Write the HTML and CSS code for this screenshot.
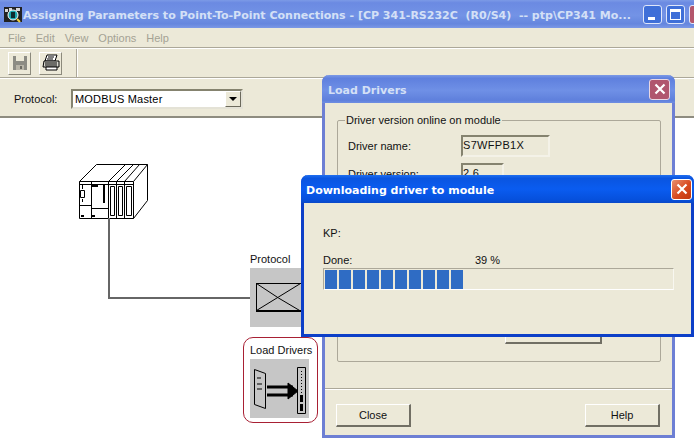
FILE: index.html
```html
<!DOCTYPE html>
<html lang="en">
<head>
<meta charset="utf-8">
<title>Assigning Parameters</title>
<link rel="stylesheet" href="styles.css">
</head>
<body>
<div class="app">
  <header class="titlebar">
    <svg class="appicon" width="18" height="18" viewBox="0 0 18 18">
      <rect x="0" y="2" width="18" height="15" fill="#222"/>
      <path d="M1 4h3v3H1zM5 3h3v3H5zM12 3h4v3h-4z" fill="#d8d8d8"/>
      <circle cx="9" cy="10" r="5" fill="#19a8b0" stroke="#fff"/>
      <path d="M7 7h4v6H7z" fill="#0c2c30"/>
      <path d="M13 14l3 3" stroke="#f0d040" stroke-width="2"/>
    </svg>
    <span class="titletext">Assigning Parameters to Point-To-Point Connections - [CP 341-RS232C&nbsp; (R0/S4)&nbsp; -- ptp\CP341 Mo...</span>
    <div class="winbtns">
      <span class="winbtn"><i class="min"></i></span>
      <span class="winbtn"><i class="max"></i></span>
      <span class="winbtn red"></span>
    </div>
  </header>
  <nav class="menubar">
    <span>File</span><span>Edit</span><span>View</span><span>Options</span><span>Help</span>
  </nav>
  <div class="toolbar">
    <button class="toolbtn" aria-label="Save">
      <svg width="16" height="16" viewBox="0 0 16 16"><path d="M1 1h14v14H1z" fill="#8c8c84"/><path d="M4 1h8v5H4z" fill="#ece9d8"/><path d="M4 10h8v5H4z" fill="#b8b5a8"/><path d="M8 11h2v3H8z" fill="#6c6c64"/></svg>
    </button>
    <button class="toolbtn" aria-label="Print">
      <svg width="20" height="18" viewBox="0 0 20 18"><path d="M6 1h10l-2 6H4z" fill="#fff" stroke="#000"/><path d="M3 7h15v6H2z" fill="#d8d8d0" stroke="#000"/><path d="M5 13h11v3H5z" fill="#fff" stroke="#000"/><path d="M7 3h6M6 5h6M4 9h12M4 11h12" stroke="#000"/></svg>
    </button>
    <div class="toolsep"></div>
  </div>
  <div class="protocolbar">
    <label class="protolabel">Protocol:</label>
    <div class="combo">
      <span class="combotext">MODBUS Master</span>
      <span class="comboarrow"></span>
    </div>
  </div>
  <main class="canvas">
    <svg class="node rack" width="70" height="56" viewBox="0 0 70 56" fill="none" stroke="#000">
      <path d="M.5 17.500h54v37H.5zM.5 17.500l17-17h51v36l-14 18M54.500 17.500l14-17"/>
      <path d="M29.500 17.500l17-17M37.500 17.500l17-17M45.500 17.500l15-17"/>
      <path d="M12.500 17.500v37M29.500 17.500v37M37.500 17.500v37M45.500 17.500v37M.5 20.500h54M.5 41.500h12M12.500 44.500h17"/>
      <path d="M31.500 22.500h4v29h-4zM39.500 22.500h4v29h-4zM47.500 22.500h5v29h-5z"/>
      <path d="M1.500 26.500h4v7h-4zM3.500 21v4M3.500 35v3"/>
      <path d="M13 21h6v2h-6zM24 21h2v18h-2zM2 51h3v2H2zM13 51h3v2h-3z" fill="#000" stroke="none"/>
    </svg>
    <div class="wire-v"></div>
    <div class="wire-h"></div>

    <div class="node proto-node">
      <div class="nodelabel">Protocol</div>
      <div class="tile">
        <svg class="envelope" width="60" height="30" viewBox="0 0 60 30" fill="none" stroke="#000">
          <path d="M.5 .5h59M.5 0v28"/>
          <path d="M0 28h60" stroke-width="2"/>
          <path d="M.5 .5l22 14.500 22 13M.5 27.500l22-13.500 22-13.500"/>
        </svg>
      </div>
    </div>

    <div class="node driver-node">
      <div class="nodelabel">Load Drivers</div>
      <div class="tile">
        <svg class="drivericon" width="59" height="59" viewBox="0 0 59 59" fill="none" stroke="#000">
          <path d="M4.500 10.500l11 4v35l-11-4z"/>
          <path d="M7 19h4M7 25h5M7 30h5"/>
          <path d="M17 28h26M17 36h26" stroke-width="3"/>
          <path d="M38 24l10 8-10 8z" fill="#000"/>
          <path d="M47.500 8.500h8v46h-8z"/>
          <path d="M51.500 12v22" stroke-dasharray="1 2"/>
          <path d="M50 36h3v7h-3zM50 45h3v7h-3z" fill="#000" stroke="none"/>
        </svg>
      </div>
    </div>
  </main>

  <section class="dialog load">
    <div class="dlgtitle load-title">
      <span class="dlgcaption">Load Drivers</span>
      <span class="closebtn faded"><svg width="12" height="12" viewBox="0 0 12 12"><path d="M1.500 1.500l9 9M10.500 1.500l-9 9" stroke="#fff" stroke-width="2.200"/></svg></span>
    </div>
    <div class="dlgbody load-body">
      <fieldset class="group">
        <legend>Driver version online on module</legend>
        <div class="fieldrow"><span class="fieldlabel">Driver name:</span><span class="field wide">S7WFPB1X</span></div>
        <div class="fieldrow"><span class="fieldlabel">Driver version:</span><span class="field narrow">2.6</span></div>
        <div class="hiddenbtnrow"><span class="hiddenbtn"></span></div>
      </fieldset>
      <div class="dlgfooter">
        <button class="btn">Close</button>
        <button class="btn">Help</button>
      </div>
    </div>
  </section>

  <section class="dialog progress">
    <div class="dlgtitle progress-title">
      <span class="dlgcaption">Downloading driver to module</span>
      <span class="closebtn active"><svg width="12" height="12" viewBox="0 0 12 12"><path d="M1.500 1.500l9 9M10.500 1.500l-9 9" stroke="#fff" stroke-width="2.200"/></svg></span>
    </div>
    <div class="dlgbody progress-body">
      <div class="kp">KP:</div>
      <div class="donerow"><span class="donelabel">Done:</span><span>39 %</span></div>
      <div class="bar">
        <i></i><i></i><i></i><i></i><i></i><i></i><i></i><i></i><i></i><i></i>
      </div>
    </div>
  </section>
</div>
</body>
</html>
```
FILE: styles.css
```css
* { box-sizing: border-box; }
html, body { margin: 0; height: 100%; overflow: hidden; }
body { font: 11px "Liberation Sans", Arial, sans-serif; color: #111; background: #ece9d8; }
.app { position: relative; width: 694px; height: 441px; display: flex; flex-direction: column; overflow: hidden; }

.titlebar {
  height: 28px; display: flex; align-items: center; padding: 0 0 0 4px; flex: none;
  background: linear-gradient(#7c9ae6 0, #6b8ae2 10%, #7393e6 55%, #6586de 85%, #7b98e6 100%);
}
.appicon { margin-right: 1px; flex: none; }
.titletext { font: bold 11px "DejaVu Sans", sans-serif; color: #d4e0f6; white-space: pre; flex: none; padding-top: 2px; }
.winbtns { display: flex; gap: 4px; margin-left: auto; margin-right: -14px; flex: none; }
.winbtn { width: 19px; height: 19px; border-radius: 3px; border: 1px solid #dfe6fa; background: #3f6fd8; display: flex; align-items: center; justify-content: center; position: relative; }
.winbtn.red { background: #b4566c; }
.min { width: 7px; height: 3px; background: #fff; position: absolute; left: 4px; bottom: 3px; }
.max { width: 11px; height: 11px; border: 1px solid #fff; border-top-width: 3px; }

.menubar { height: 20px; display: flex; align-items: center; gap: 10px; padding-left: 8px; color: #a4a294; border-bottom: 1px solid #aca899; flex: none; }
.toolbar { height: 30px; display: flex; align-items: center; gap: 8px; padding-left: 8px; border-top: 1px solid #fff; border-bottom: 1px solid #aca899; flex: none; }
.toolbtn { width: 23px; height: 23px; padding: 0; background: #ece9d8; border: 1px solid; border-color: #fff #8c8a7c #8c8a7c #fff; display: flex; align-items: center; justify-content: center; }
.toolsep { width: 2px; height: 28px; margin-left: 6px; border-left: 1px solid #aca899; border-right: 1px solid #fff; }

.protocolbar { height: 38px; display: flex; align-items: center; padding: 2px 0 0 14px; flex: none; border-top: 1px solid #fff; }
.protolabel { width: 57px; }
.combo { width: 172px; height: 20px; background: #fff; border: 2px solid; border-color: #85836f #e4e2d6 #e4e2d6 #85836f; display: flex; align-items: center; justify-content: space-between; padding: 0 0 0 2px; }
.combotext { color: #000; letter-spacing: .2px; }
.comboarrow { width: 16px; height: 16px; background: #ece9d8; border: 1px solid; border-color: #fff #6c6a5c #6c6a5c #fff; position: relative; }
.comboarrow::after { content: ""; position: absolute; left: 3px; top: 5px; border: 4px solid transparent; border-top: 4px solid #000; border-bottom: 0; }

.canvas { flex: 1; position: relative; background: #fff; border-top: 2px solid #8e8c80; }
.node { position: absolute; }
.rack { left: 79px; top: 46px; }
.wire-v { position: absolute; left: 108px; top: 100px; width: 2px; height: 81px; background: #666; }
.wire-h { position: absolute; left: 108px; top: 179px; width: 142px; height: 2px; background: #666; }
.nodelabel { color: #111; height: 15px; line-height: 13px; white-space: nowrap; }
.tile { width: 59px; height: 59px; background: #c6c6c6; position: relative; }
.proto-node { left: 250px; top: 135px; width: 70px; }
.proto-node .tile { width: 70px; }
.envelope { position: absolute; left: 6px; top: 15px; }
.driver-node { left: 243px; top: 219px; width: 75px; height: 86px; border: 1px solid #a82034; border-radius: 10px; padding: 6px 0 0 6px; }
.drivericon { position: absolute; left: 0; top: 0; }

.dialog { position: absolute; background: #ece9d8; display: flex; flex-direction: column; }
.dlgtitle { height: 28px; display: flex; align-items: center; justify-content: space-between; font: bold 11px "DejaVu Sans", sans-serif; flex: none; border-radius: 7px 7px 0 0; }
.dlgcaption { padding-top: 2px; }
.load { left: 322px; top: 75px; width: 353px; height: 363px; border: solid #6d7fd4; border-width: 0 3px 3px 3px; border-radius: 7px 7px 0 0; }
.load-title { margin: 0 -3px; padding: 0 5px 0 6px; color: #d4e0f6; background: linear-gradient(#7c9ae6 0, #5f80de 12%, #6f90e6 55%, #5f80dc 90%, #6f8ee2 100%); }
.load-body { flex: 1; padding: 11px 11px 0 12px; display: flex; flex-direction: column; }
.group { border: 1px solid #aca899; border-radius: 2px; margin: 0; padding: 9px 0 0 10px; height: 248px; flex: none; min-width: 0; }
.group legend { padding: 0 1px; margin-left: -3px; }
.fieldrow { display: flex; align-items: center; height: 22px; margin-bottom: 6px; }
.fieldlabel { width: 113px; flex: none; }
.field { height: 22px; border: 2px solid; border-color: #85836f #f4f2e8 #f4f2e8 #85836f; padding: 2px 0 0; letter-spacing: .3px; }
.field.wide { width: 89px; }
.field.narrow { width: 43px; }
.hiddenbtnrow { display: flex; padding: 128px 0 0 157px; }
.hiddenbtn { width: 97px; height: 25px; border: 1px solid; border-color: #fff #716f64 #716f64 #fff; border-width: 1px 2px 2px 1px; }
.dlgfooter { margin: 26px -11px 0 -12px; border-top: 1px solid #aca899; padding: 15px 12px 0 11px; display: flex; justify-content: space-between; box-shadow: inset 0 1px 0 #fff; }
.btn { width: 75px; height: 23px; padding: 0; font: 11px "Liberation Sans", Arial, sans-serif; color: #111; background: #ece9d8; border: solid; border-width: 1px 2px 2px 1px; border-color: #fff #716f64 #716f64 #fff; }

.closebtn { width: 21px; height: 21px; border-radius: 3px; display: flex; align-items: center; justify-content: center; border: 1px solid #e8d8e4; }
.closebtn.faded { background: #b0566e; }
.closebtn.active { background: linear-gradient(135deg, #e89070, #d84a20 55%, #c03810); border-color: #fff; }

.progress { left: 301px; top: 175px; width: 393px; height: 162px; border: solid #0c3fc8; border-width: 0 3px 3px 3px; border-radius: 7px 7px 0 0; }
.progress-title { margin: 0 -3px; padding: 0 2px 0 5px; color: #fff; background: linear-gradient(#1f6ff0 0, #0a55e0 12%, #0a5cf0 50%, #0650dc 88%, #0a48c8 100%); }
.progress-body { flex: 1; padding: 24px 17px 0 19px; }
.kp { height: 27px; }
.donerow { display: flex; height: 14px; }
.donelabel { width: 152px; }
.bar { height: 22px; border: 1px solid; border-color: #aca899 #f8f7f0 #fff #aca899; padding: 1px 0 1px 1px; display: flex; gap: 2px; }
.bar i { width: 12px; height: 19px; background: #2f6cc4; }
```
